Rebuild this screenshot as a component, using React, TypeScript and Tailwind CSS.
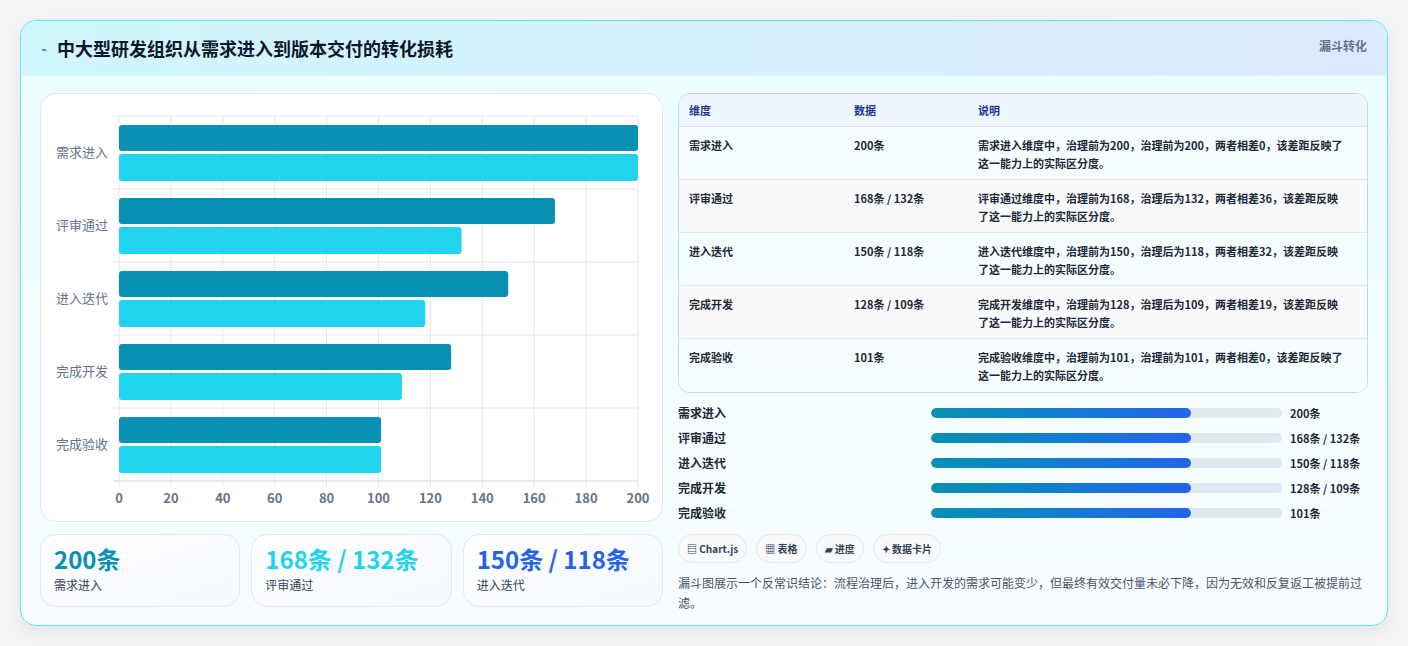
import React from "react";

const rows = [
  { n: "需求进入", a: 200, b: 200, v: "200条", d: "需求进入维度中，治理前为200，治理前为200，两者相差0，该差距反映了这一能力上的实际区分度。" },
  { n: "评审通过", a: 168, b: 132, v: "168条 / 132条", d: "评审通过维度中，治理前为168，治理后为132，两者相差36，该差距反映了这一能力上的实际区分度。" },
  { n: "进入迭代", a: 150, b: 118, v: "150条 / 118条", d: "进入迭代维度中，治理前为150，治理后为118，两者相差32，该差距反映了这一能力上的实际区分度。" },
  { n: "完成开发", a: 128, b: 109, v: "128条 / 109条", d: "完成开发维度中，治理前为128，治理后为109，两者相差19，该差距反映了这一能力上的实际区分度。" },
  { n: "完成验收", a: 101, b: 101, v: "101条", d: "完成验收维度中，治理前为101，治理前为101，两者相差0，该差距反映了这一能力上的实际区分度。" },
];

const font = { fontFamily: '"Noto Sans CJK SC", "Noto Sans", sans-serif' };

function Chart() {
  const x0 = 78, sc = (597 - 78) / 200, top = 22, band = 73;
  return (
    <svg width="621" height="426" className="block">
      {Array.from({ length: 11 }).map((_, i) => (
        <line key={"v" + i} x1={x0 + i * 20 * sc} x2={x0 + i * 20 * sc} y1={top} y2={top + band * 5 + 6} stroke="#e5e7eb" />
      ))}
      {Array.from({ length: 6 }).map((_, i) => (
        <line key={"h" + i} x1={x0 - 6} x2={597} y1={top + i * band} y2={top + i * band} stroke={i === 5 ? "#d1d5db" : "#e5e7eb"} />
      ))}
      {rows.map((r, i) => {
        const y = top + i * band;
        return (
          <g key={r.n}>
            <rect x={x0} y={y + 9} width={r.a * sc} height={26} rx={3} fill="#0891b2" />
            <rect x={x0} y={y + 38} width={r.b * sc} height={27} rx={3} fill="#22d3ee" />
            <text x={x0 - 11} y={y + 41} textAnchor="end" fontSize="13" fill="#64748b" style={font}>{r.n}</text>
          </g>
        );
      })}
      {Array.from({ length: 11 }).map((_, i) => (
        <text key={"t" + i} x={x0 + i * 20 * sc} y={409} textAnchor="middle" fontSize="13" fontWeight="600" fill="#64748b" style={font}>{i * 20}</text>
      ))}
    </svg>
  );
}

export default function App() {
  return (
    <div className="w-[1408px] h-[646px] bg-[#f3f4f6] pt-5 px-5" style={font}>
      <div className="h-[606px] rounded-2xl border border-[#67e8f9] bg-gradient-to-b from-[#ecfeff] to-[#f8fdff] overflow-hidden shadow-[0_6px_16px_rgba(0,0,0,0.06)]">
        <div className="h-[55px] bg-gradient-to-r from-[#cff7fd] to-[#dbeafe] flex items-center justify-between pl-5 pr-5 border-b border-[#e0f2fe]">
          <div className="flex items-center gap-2.5">
            <span className="text-[#2563eb] text-[10px]">⌁</span>
            <span className="text-[18px] font-bold text-[#0f172a]">中大型研发组织从需求进入到版本交付的转化损耗</span>
          </div>
          <span className="text-[12px] font-bold text-[#64748b] self-start mt-4">漏斗转化</span>
        </div>
        <div className="flex gap-[15px] px-[19px] pt-[17px]">
          <div className="w-[623px] flex flex-col gap-3">
            <div className="h-[429px] rounded-2xl border border-[#e2e8f0] bg-white overflow-hidden">
              <Chart />
            </div>
            <div className="grid grid-cols-3 gap-[11px]">
              {[
                ["200条", "需求进入", "text-[#0891b2]"],
                ["168条 / 132条", "评审通过", "text-[#22d3ee]"],
                ["150条 / 118条", "进入迭代", "text-[#2563eb]"],
              ].map(([v, l, c]) => (
                <div key={l} className="h-[73px] rounded-2xl border border-[#dbeafe] bg-gradient-to-br from-white to-[#f5f9ff] px-[13px] pt-[9px]">
                  <div className={`text-[24px] leading-[30px] font-bold ${c}`}>{v}</div>
                  <div className="text-[12px] text-[#334155] mt-0.5">{l}</div>
                </div>
              ))}
            </div>
          </div>
          <div className="w-[690px] flex flex-col">
            <div className="rounded-xl border border-[#cbd5e1] overflow-hidden bg-white">
              <div className="grid grid-cols-[165px_124px_1fr] h-[33px] items-center bg-[#eff6ff] border-b border-[#dbe3ee] px-[10px] text-[11px] font-semibold text-[#1e3a8a]">
                <div>维度</div><div>数据</div><div>说明</div>
              </div>
              {rows.map((r, i) => (
                <div key={r.n} className={`grid grid-cols-[165px_124px_1fr] h-[53px] pt-[9px] px-[10px] text-[11px] leading-[18px] font-semibold text-[#1f2937] ${i % 2 ? "bg-[#f8fafc]" : "bg-[#f5feff]"} ${i < 4 ? "border-b border-[#e2e8f0]" : ""}`}>
                  <div>{r.n}</div><div>{r.v}</div><div className="pr-3">{r.d}</div>
                </div>
              ))}
            </div>
            <div className="flex flex-col gap-[7px] mt-[11px]">
              {rows.map((r) => (
                <div key={r.n} className="flex items-center gap-2 h-[18px]">
                  <div className="flex-[7] basis-0 text-[12px] font-semibold text-[#1f2937]">{r.n}</div>
                  <div className="flex-[10] basis-0 h-[10px] rounded-full bg-[#e2e8f0] overflow-hidden">
                    <div className="h-full w-[74%] rounded-full bg-gradient-to-r from-[#0891b2] to-[#2563eb]" />
                  </div>
                  <div className="text-[11px] font-bold text-[#1f2937] w-[78px]">{r.v}</div>
                </div>
              ))}
            </div>
            <div className="flex gap-[9px] mt-[12px]">
              {["▤ Chart.js", "▦ 表格", "▰ 进度", "✦ 数据卡片"].map((t) => (
                <div key={t} className="h-[29px] px-[8px] rounded-full border border-[#e5e7eb] bg-[#f8fafc] flex items-center text-[10px] font-semibold text-[#334155]">{t}</div>
              ))}
            </div>
            <p className="mt-[10px] text-[12px] leading-[20px] text-[#475569]">漏斗图展示一个反常识结论：流程治理后，进入开发的需求可能变少，但最终有效交付量未必下降，因为无效和反复返工被提前过滤。</p>
          </div>
        </div>
      </div>
    </div>
  );
}
